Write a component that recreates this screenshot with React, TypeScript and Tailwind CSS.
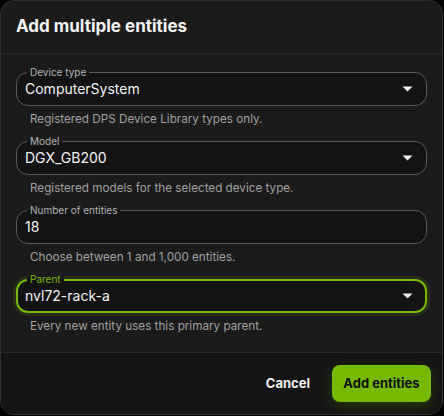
import React from 'react';

type FieldProps = {
  label: string;
  value: string;
  helper: string;
  select?: boolean;
  active?: boolean;
};

function Caret() {
  return (
    <svg width="11" height="6" viewBox="0 0 11 6" className="shrink-0">
      <path d="M0.5 0.5h10L5.5 5.5z" fill="#f2f2f2" />
    </svg>
  );
}

function Field({ label, value, helper, select, active }: FieldProps) {
  return (
    <div className="flex flex-col">
      <div
        className={`relative h-[34px] rounded-[12px] bg-[#131313] flex items-center ${
          active
            ? 'border-2 border-[#76b900] shadow-[0_0_0_3px_rgba(118,185,0,0.14)] pl-[7px] pr-[12px]'
            : 'border border-[#5b5b5b] pl-[8px] pr-[13px]'
        }`}
      >
        <span
          className={`absolute px-[3px] text-[10px] leading-[12px] bg-[linear-gradient(to_bottom,#1b1b1b_50%,#131313_50%)] ${
            active ? '-top-[8px] left-[9px] text-[#76b900]' : '-top-[7px] left-[10px] text-[#b4b4b4]'
          }`}
        >
          {label}
        </span>
        <span className="flex-1 text-[14px] leading-[18px] text-[#f2f2f2]">{value}</span>
        {select && <Caret />}
      </div>
      <p className="mt-[6px] mb-[15px] pl-[14px] text-[11.7px] leading-[14px] text-[#a0a0a0]">{helper}</p>
    </div>
  );
}

export default function App() {
  return (
    <div className="w-[444px] h-[416px] bg-black" style={{ fontFamily: 'Inter, "Noto Sans", sans-serif' }}>
      <div className="w-[443px] h-[415px] rounded-[14px] border border-[#2e2e2e] bg-[#1b1b1b] overflow-hidden flex flex-col">
        <div className="h-[53px] shrink-0 px-[15px] flex items-center border-b border-[#2a2a2a]">
          <h1 className="text-[17px] font-bold text-[#f4f4f4]">Add multiple entities</h1>
        </div>

        <div className="flex-1 px-[15px] pt-[18px]">
          <Field
            label="Device type"
            value="ComputerSystem"
            helper="Registered DPS Device Library types only."
            select
          />
          <Field
            label="Model"
            value="DGX_GB200"
            helper="Registered models for the selected device type."
            select
          />
          <Field label="Number of entities" value="18" helper="Choose between 1 and 1,000 entities." />
          <Field
            label="Parent"
            value="nvl72-rack-a"
            helper="Every new entity uses this primary parent."
            select
            active
          />
        </div>

        <div className="h-[62px] shrink-0 bg-[#141414] border-t border-[#292929] flex items-center justify-end gap-[22px] pr-[11px]">
          <button className="text-[13px] font-bold text-[#f2f2f2]">Cancel</button>
          <button className="h-[37px] w-[99px] rounded-[8px] bg-[#76b900] text-[13px] font-bold text-[#111] shadow-[0_4px_14px_rgba(118,185,0,0.22)]">
            Add entities
          </button>
        </div>
      </div>
    </div>
  );
}
